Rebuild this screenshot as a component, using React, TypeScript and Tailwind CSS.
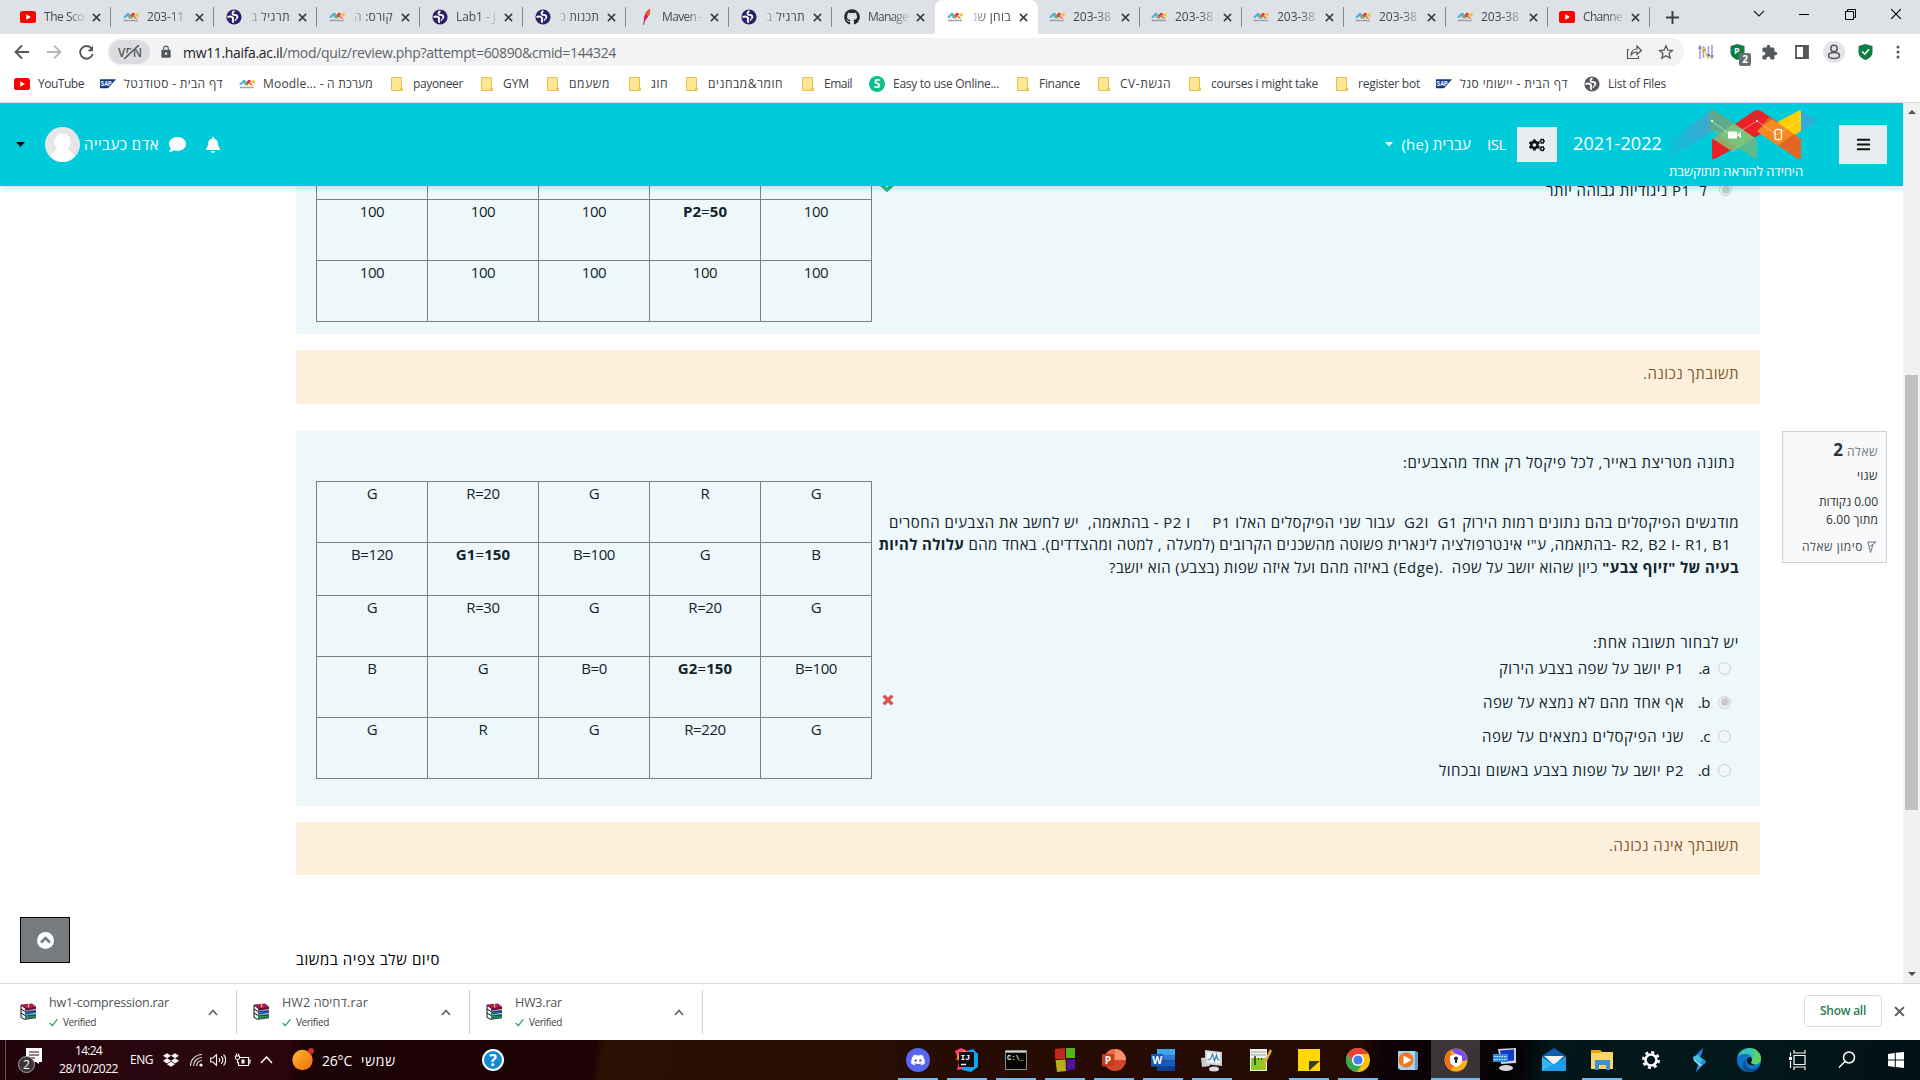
import React, { useLayoutEffect, useRef, useState } from "react";
import { FaBars, FaBell, FaCogs, FaComment, FaDiscord, FaDropbox, FaGithub } from "react-icons/fa";
import { MdExtension, MdLock } from "react-icons/md";

/* Text whose letter spacing is adjusted so that the run fills exactly w pixels. */
function Fit({ w, children, className = "", rtl = false }: { w: number; children: React.ReactNode; className?: string; rtl?: boolean }) {
  const ref = useRef<HTMLSpanElement>(null);
  const [ls, setLs] = useState(0);
  useLayoutEffect(() => {
    const el = ref.current;
    if (!el) return;
    const n = (el.textContent || "").length;
    const natural = el.getBoundingClientRect().width - ls * n;
    setLs((w - natural) / n);
  }, [w]);
  return (
    <span dir={rtl ? "rtl" : "ltr"} className={"inline-block shrink-0 whitespace-pre " + className}>
      <span ref={ref} className="inline-block" style={{ letterSpacing: ls }}>{children}</span>
    </span>
  );
}

/* ---------- small icons ---------- */
const YouTube = () => (
  <svg width="16" height="12" viewBox="0 0 16 12"><rect width="16" height="12" rx="2.6" fill="#f00" /><path d="M6.3 3.3v5.4L11 6z" fill="#fff" /></svg>
);
const Moodle = () => (
  <svg width="17" height="10" viewBox="0 0 17 10">
    <path d="M0 5.500 4.500.8Q5.500 0 6.500 1L8 2.500 6.500 4 5.500 3.200 2.500 6z" fill="#45b0e2" />
    <path d="M5.500 6 10 .8q1-.8 2 .2l1 1.200L11 4l-3 2.400z" fill="#e5322d" />
    <path d="M6 1.500 10.500 6.500H8L4.500 4z" fill="#63bd8e" />
    <path d="M10.500 2.500 15.500 6.500H13L9.500 4z" fill="#ee6a22" />
    <path d="M12.500 2.500 16.500.3V5L14 4z" fill="#f6c31a" />
    <path d="M1 8.700h15" stroke="#8d9094" strokeWidth="1.400" strokeDasharray="2 .5" />
  </svg>
);
const Globe = ({ c = "#2a1f6b" }: { c?: string }) => (
  <svg width="16" height="16" viewBox="0 0 16 16">
    <circle cx="8" cy="8" r="7.600" fill={c} />
    <path d="M8.500 2.200C6.500 2.800 6 4.500 7 5.400c1 .8 2.600.2 3.800 1.200.9.900.6 2.200-.3 2.900M1.500 8c2-.6 4.500-.5 5.500.8.6 1-.4 1.800-.2 3 .1.700.4 1.200.2 2" fill="none" stroke="#fff" strokeWidth="1.900" />
    <path d="M10.500 9.500c-.3 1-1.300 1.200-1.500 2.300" fill="none" stroke="#fff" strokeWidth="1.200" />
  </svg>
);
const Feather = () => (
  <svg width="16" height="16" viewBox="0 0 16 16"><path d="M11.500 0c2 2-.5 7.500-4 11L5.800 16l-.8-.3 1-4.700C5.500 7 8.500 1.500 11.500 0z" fill="#c8234b" /><path d="M11.500 0c1.500 1.800.5 4.500-1 7L8 6c.6-2.500 2-5 3.500-6z" fill="#e8622c" /></svg>
);
const Folder = () => (
  <svg width="16" height="16" viewBox="0 0 16 16"><path d="M2.500 1.500h10v11h1v2h-11z" fill="#ffe793" stroke="#e6c04a" /><path d="M11.500 14.500v-2h2" fill="none" stroke="#e6c04a" /></svg>
);
const Sap = () => (
  <svg width="17" height="10" viewBox="0 0 17 10"><path d="M0 0h17L8.500 9.500H0z" fill="#123a8c" /><text x=".5" y="7" fontSize="7" fontWeight="700" fill="#fff" fontFamily="Liberation Sans, sans-serif" textLength="12" lengthAdjust="spacingAndGlyphs">SAP</text></svg>
);
const SBadge = () => (
  <span className="flex h-4 w-4 shrink-0 items-center justify-center rounded-full bg-[#0fbf8b] font-['Open_Sans'] text-[12px] font-bold text-white">S</span>
);
const Close = ({ s = 9, c = "#3c4043", w = 1.8 }: { s?: number; c?: string; w?: number }) => (
  <svg width={s} height={s} viewBox="0 0 10 10"><path d="M1 1l8 8M9 1l-8 8" stroke={c} strokeWidth={w} /></svg>
);

/* ---------- browser chrome ---------- */
const tabs: { icon: React.ReactNode; t: string; w: number; rtl?: boolean; active?: boolean }[] = [
  { icon: <YouTube />, t: "The Sco", w: 40 },
  { icon: <Moodle />, t: "203-11", w: 37 },
  { icon: <Globe />, t: "תרגיל ב", w: 39, rtl: true },
  { icon: <Moodle />, t: "קורס: ה", w: 39, rtl: true },
  { icon: <Globe />, t: "Lab1 - J", w: 40 },
  { icon: <Globe />, t: "תכנות כ", w: 39, rtl: true },
  { icon: <Feather />, t: "Maven -", w: 40 },
  { icon: <Globe />, t: "תרגיל ב", w: 39, rtl: true },
  { icon: <FaGithub size={16} color="#24292f" />, t: "Manage", w: 40 },
  { icon: <Moodle />, t: "בוחן שנ", w: 39, rtl: true, active: true },
  { icon: <Moodle />, t: "203-38", w: 38 },
  { icon: <Moodle />, t: "203-38", w: 38 },
  { icon: <Moodle />, t: "203-38", w: 38 },
  { icon: <Moodle />, t: "203-38", w: 38 },
  { icon: <Moodle />, t: "203-38", w: 38 },
  { icon: <YouTube />, t: "Channe", w: 39 },
];

function TabStrip() {
  return (
    <div className="flex h-[34px] w-full bg-[#dee1e6] pl-2">
      {tabs.map((t, i) => (
        <div
          key={i}
          className={
            "flex h-[34px] shrink-0 items-center " +
            (i < 10 ? "w-[103px] pl-3 " : "w-[102px] pl-[11px] ") +
            (t.active ? "rounded-t-lg bg-white" : "")
          }
        >
          <span className="flex w-4 shrink-0 justify-center">{t.icon}</span>
          <span
            className={
              "ml-2 flex w-[40px] shrink-0 text-[12px] text-[#45494d] " +
              (t.rtl
                ? "justify-end [mask-image:linear-gradient(to_left,black_60%,rgba(0,0,0,0.15))]"
                : "[mask-image:linear-gradient(to_right,black_60%,rgba(0,0,0,0.15))]")
            }
          >
            <Fit w={t.w} rtl={t.rtl}>{t.t}</Fit>
          </span>
          <span className="ml-[6px] flex w-3 justify-center"><Close /></span>
          <span className="flex-1" />
          {!t.active && i !== 8 && <span className="h-5 w-px bg-[#85888d]" />}
        </div>
      ))}
      <div className="flex h-[34px] flex-1 items-center">
        <svg className="ml-[16px]" width="13" height="13" viewBox="0 0 13 13"><path d="M6.500 0v13M0 6.500h13" stroke="#3c4043" strokeWidth="2" /></svg>
        <div className="mb-[6px] ml-[74px] flex items-center text-black">
          <svg width="12" height="8" viewBox="0 0 12 8"><path d="M1 1l5 5 5-5" fill="none" stroke="#222" strokeWidth="1.200" /></svg>
          <span className="ml-[34px] h-px w-[10px] bg-black" />
          <svg className="ml-[36px]" width="11" height="11" viewBox="0 0 11 11"><path d="M.5 2.500h8v8h-8zM2.500 2.500v-2h8v8h-2" fill="none" stroke="#000" /></svg>
          <span className="ml-[34px]"><Close s={12} c="#000" w={1} /></span>
        </div>
      </div>
    </div>
  );
}

function Toolbar() {
  return (
    <div className="flex h-[36px] w-full items-center bg-white pl-[14px]">
      <svg width="16" height="16" viewBox="0 0 16 16"><path d="M15 8H2M8 1.500 1.500 8 8 14.500" fill="none" stroke="#54575b" strokeWidth="1.800" /></svg>
      <svg className="ml-[16px]" width="16" height="16" viewBox="0 0 16 16"><path d="M1 8h13M8 1.500 14.500 8 8 14.500" fill="none" stroke="#b6b9bc" strokeWidth="1.800" /></svg>
      <svg className="ml-[17px]" width="15" height="15" viewBox="0 0 15 15"><path d="M12.500 3.500A6.300 6.300 0 1 0 13.600 9" fill="none" stroke="#54575b" strokeWidth="1.900" /><path d="M14 .8v5.400H8.600z" fill="#54575b" /></svg>
      <div className="ml-[13px] flex h-7 w-[1577px] items-center rounded-full bg-[#f1f3f4] pl-[2px]">
        <span className="flex h-6 w-[41px] items-center justify-center rounded-full bg-[#dadce0]">
          <svg width="24" height="14" viewBox="0 0 24 14">
            <text x="0" y="12" fontSize="13" fontWeight="600" fill="#54575b" fontFamily="Open Sans, sans-serif" textLength="24" lengthAdjust="spacingAndGlyphs">VPN</text>
            <path d="M5 14 20 0" stroke="#dadce0" strokeWidth="3" /><path d="M6 14 21 0" stroke="#54575b" strokeWidth="1.500" />
          </svg>
        </span>
        <MdLock className="ml-[9px]" size={14} color="#54575b" />
        <Fit w={433} className="ml-[10px] text-[14px] text-[#5f6368]"><span className="text-[#202124]">mw11.haifa.ac.il</span>/mod/quiz/review.php?attempt=60890&amp;cmid=144324</Fit>
        <span className="flex-1" />
        <svg width="16" height="16" viewBox="0 0 16 16"><path d="M3 5.500H1.500v9h11V12M5 11c.3-4 2.500-6 6-6V2l4.300 4.500L11 10.500V8C8.500 8 6.500 8.800 5 11z" fill="none" stroke="#54575b" strokeWidth="1.200" /></svg>
        <svg className="ml-[16px] mr-[10px]" width="16" height="16" viewBox="0 0 16 16"><path d="m8 1.800 1.900 4.300 4.600.4-3.500 3 1.100 4.600L8 11.700l-4.100 2.400L5 9.500l-3.500-3 4.600-.4z" fill="none" stroke="#54575b" strokeWidth="1.300" /></svg>
      </div>
      <svg className="ml-[14px]" width="16" height="16" viewBox="0 0 16 16"><path d="M2 1v14M14 1v14M5.500 2v12M10.500 2v12" stroke="#a89be3" strokeWidth="1.600" /><path d="M.5 4h3M4 6h3M9 11h3M12.500 12h3" stroke="#6c5bc7" strokeWidth="1.500" /><path d="M4 9c2-7 3-7 4 0s2 5 4 4" fill="none" stroke="#ddd53a" strokeWidth="1.300" /></svg>
      <div className="relative ml-[16px] h-4 w-4">
        <svg width="15" height="16" viewBox="0 0 15 16"><path d="M7.500 0 14.500 2v6c0 4-3 6.500-7 8-4-1.500-7-4-7-8V2z" fill="#0c8043" /></svg>
        <span className="absolute left-[4px] top-[1px] text-[9px] font-bold leading-[12px] text-white">P</span>
        <span className="absolute left-[9px] top-[9px] flex h-[13px] w-[12px] items-center justify-center rounded-[2px] bg-[#6b6f74] text-[10px] font-bold text-white">2</span>
      </div>
      <MdExtension className="ml-[15px]" size={17} color="#54575b" />
      <svg className="ml-[17px]" width="14" height="14" viewBox="0 0 14 14"><path d="M1 1h12v12H1z" fill="none" stroke="#54575b" strokeWidth="1.800" /><path d="M8 1h5v12H8z" fill="#54575b" /></svg>
      <span className="ml-[14px] flex h-[22px] w-[22px] items-center justify-center rounded-full bg-[#e3e4ea]">
        <svg width="14" height="16" viewBox="0 0 14 16"><circle cx="7" cy="4.500" r="3.200" fill="none" stroke="#54575b" strokeWidth="1.500" /><path d="M1.500 11.500c0-1.500 2-3 5.500-3s5.500 1.500 5.500 3-2 3-5.500 3-5.500-1.500-5.500-3z" fill="none" stroke="#54575b" strokeWidth="1.500" /></svg>
      </span>
      <svg className="ml-[13px]" width="15" height="16" viewBox="0 0 15 16"><path d="M7.500 0 14.500 2v6c0 4-3 6.500-7 8-4-1.500-7-4-7-8V2z" fill="#0c8043" /><path d="m4.200 7.500 2.500 2.700 4.300-5" fill="none" stroke="#fff" strokeWidth="1.500" /></svg>
      <svg className="ml-[23px]" width="4" height="14" viewBox="0 0 4 14"><circle cx="2" cy="2" r="1.500" fill="#54575b" /><circle cx="2" cy="7" r="1.500" fill="#54575b" /><circle cx="2" cy="12" r="1.500" fill="#54575b" /></svg>
    </div>
  );
}

const bookmarks: { k: string; w: number; t: React.ReactNode; rtl?: boolean; cell: string }[] = [
  { k: "yt", w: 46, t: "YouTube", cell: "w-[86px]" },
  { k: "sap", w: 99, t: "דף הבית - סטודנטל", rtl: true, cell: "w-[139px]" },
  { k: "moodle", w: 110, t: "Moodle... - מערכת ה", cell: "w-[150px]" },
  { k: "f", w: 50, t: "payoneer", cell: "w-[90px]" },
  { k: "f", w: 26, t: "GYM", cell: "w-[66px]" },
  { k: "f", w: 41, t: "משעמם", rtl: true, cell: "w-[82px]" },
  { k: "f", w: 17, t: "חוג", rtl: true, cell: "w-[57px]" },
  { k: "f", w: 75, t: "חומר&מבחנים", rtl: true, cell: "w-[116px]" },
  { k: "f", w: 28, t: "Email", cell: "w-[69px]" },
  { k: "s", w: 106, t: "Easy to use Online...", cell: "w-[146px]" },
  { k: "f", w: 41, t: "Finance", cell: "w-[81px]" },
  { k: "f", w: 51, t: "CV-הגשת", cell: "w-[91px]" },
  { k: "f", w: 107, t: "courses i might take", cell: "w-[147px]" },
  { k: "f", w: 62, t: "register bot", cell: "w-[102px]" },
  { k: "sap", w: 108, t: "דף הבית - יישומי סגל", rtl: true, cell: "w-[148px]" },
  { k: "g", w: 58, t: "List of Files", cell: "w-[90px]" },
];
const bmIcon: Record<string, React.ReactNode> = {
  yt: <YouTube />, sap: <Sap />, moodle: <Moodle />, f: <Folder />, s: <SBadge />, g: <Globe c="#54575b" />,
};

function Bookmarks() {
  return (
    <div className="flex h-[33px] w-full items-center border-b border-[#dadce0] bg-white pb-[4px] pl-[14px]">
      {bookmarks.map((b, i) => (
        <div key={i} className={"flex shrink-0 items-center " + b.cell}>
          <span className="mr-2 flex w-4 shrink-0 justify-center">{bmIcon[b.k]}</span>
          <Fit w={b.w} rtl={b.rtl} className="text-[12px] leading-[16px] text-[#3c4043]">{b.t}</Fit>
        </div>
      ))}
    </div>
  );
}

/* ---------- site header ---------- */
const Logo = () => (
  <svg className="shrink-0" width="150" height="50" viewBox="0 0 150 50">
    <defs>
      <linearGradient id="lb" x1="0" x2="1"><stop offset="0" stopColor="#08c2dd" /><stop offset=".8" stopColor="#3aa8cf" /><stop offset="1" stopColor="#5eaa96" /></linearGradient>
    </defs>
    <path d="M0 31 40 2q3-2 6 0v17L0 49z" fill="url(#lb)" />
    <path d="M43 30 85 1q3.500-2 7 0l18 12-18 11L45.500 49q-2.500 1-2.500-1.500z" fill="#ea2127" />
    <path d="M41 1q3-1.500 6 0l41 28.500V47q0 3-2.500 1.500L42 20z" fill="#5cbb90" />
    <path d="M41 1q3-1.500 6 0l18 12.500L53 23l-11-4z" fill="#5faa8c" />
    <path d="m65 13.500 20 14L64 42 44 29z" fill="#7fc47b" fillOpacity=".85" />
    <path d="M129 1q3-2 3 1.500V21l-22 14-20-13z" fill="#ffcf05" />
    <path d="m100 7 32 22v18q0 3.500-3 2L88 21.500z" fill="#e26524" />
    <path d="m103 9 22 15-16 11.500L88 21.500z" fill="#f58a20" />
    <path d="M132 1 149 11l-17 11z" fill="#2bb0dc" />
    <path d="m43 11 20 15 25-15 20 14 24-16" fill="none" stroke="#fff" strokeOpacity=".6" strokeWidth=".7" />
    <circle cx="43" cy="11" r="1" fill="#fff" /><circle cx="88" cy="11" r="1" fill="#fff" />
    <path d="M84 5.500q4-3 8 0M85.500 8q2.500-2 5 0" fill="none" stroke="#a3343c" />
    <rect x="59" y="21.500" width="9" height="7" rx="1" fill="#fff" /><path d="m68 25 4-3v6z" fill="#fff" />
    <rect x="106" y="19.500" width="6.500" height="10" rx="1.500" fill="none" stroke="#fff" strokeWidth="1.300" />
  </svg>
);

function Header() {
  return (
    <div className="z-10 flex h-[83px] w-full shrink-0 items-center bg-[#00cbdb] pl-4 pr-4 text-white shadow-[0_2px_5px_rgba(0,0,0,0.14)]">
      <svg width="10" height="6" viewBox="0 0 10 6"><path d="M0 0h9L4.500 5z" fill="#000" /></svg>
      <span className="ml-[19px] flex h-[35px] w-[35px] overflow-hidden rounded-full bg-[#e6e6e6]">
        <svg width="35" height="35" viewBox="0 0 35 35"><path d="M17.500 6.500c4.500 0 8 3 8 8 0 3-1 6-3 8 4 2 7 5 9 8.500V35h-28v-4c2-3.500 5-6.500 9-8.500-2-2-3-5-3-8 0-5 3.500-8 8-8z" fill="#fff" /></svg>
      </span>
      <Fit w={75} rtl className="ml-[4px] text-[15px]">אדם כעבייה</Fit>
      <FaComment className="ml-[10px]" size={17} />
      <FaBell className="ml-[19px]" size={16} />
      <span className="flex-1" />
      <svg width="8" height="5" viewBox="0 0 8 5"><path d="M0 0h8L4 4.500z" fill="#fff" /></svg>
      <Fit w={70} rtl className="ml-[8px] text-[15px]">עברית &lrm;(he)&lrm;</Fit>
      <Fit w={19} className="ml-[16px] text-[15px]">ISL</Fit>
      <span className="ml-[11px] flex h-[35px] w-[40px] items-center justify-center bg-[#e9ecef]"><FaCogs size={16} color="#111" /></span>
      <Fit w={89} className="mb-[2px] ml-[16px] text-[18px]">2021-2022</Fit>
      <div className="ml-[7px] flex h-[70px] w-[152px] flex-col items-start">
        <Logo />
        <Fit w={134} rtl className="mt-[2px] text-[13px] leading-[18px]">היחידה להוראה מתוקשבת</Fit>
      </div>
      <span className="ml-[18px] flex h-[39px] w-[48px] items-center justify-center bg-[#e9ecef]"><FaBars size={15} color="#111" /></span>
    </div>
  );
}

/* ---------- quiz ---------- */
const Cell = ({ t, h }: { t: string; h: string }) => (
  <div className={"border-b border-r border-[#7d7f83] text-center text-[15px] leading-[22px] " + h}>
    {t.includes("=") && /[GP]\d/.test(t) ? (
      <span className="tracking-[0.1px]"><b>{t.split("=")[0]}</b>=<b>{t.split("=")[1]}</b></span>
    ) : (
      <span className="tracking-[-0.4px]">{t}</span>
    )}
  </div>
);
function Matrix({ rows, hs }: { rows: string[][]; hs: string[] }) {
  return (
    <div className="w-[556px] shrink-0 border-l border-t border-[#7d7f83]">
      {rows.map((r, i) => (
        <div key={i} className="grid grid-cols-5">
          {r.map((c, j) => <Cell key={j} t={c} h={hs[i]} />)}
        </div>
      ))}
    </div>
  );
}
const Radio = ({ on }: { on?: boolean }) => (
  <span className="flex h-[13px] w-[13px] shrink-0 items-center justify-center rounded-full border border-[#cbcdce] bg-[#f3f6f7]">
    {on && <span className="h-[8px] w-[8px] rounded-full bg-[#cbcbcb]" />}
  </span>
);
function Feedback({ w, t }: { w: number; t: string }) {
  return (
    <div className="flex w-[1464px] shrink-0 justify-end bg-[#fcefdc] pr-[21px] pt-[12px] text-[15px] leading-[22px] text-[#7d5a29]">
      <Fit w={w} rtl>{t}</Fit>
    </div>
  );
}
const options = [
  { k: "a.", w: 185, t: "P1 יושב על שפה בצבע הירוק" },
  { k: "b.", w: 201, t: "אף אחד מהם לא נמצא על שפה", on: true },
  { k: "c.", w: 202, t: "שני הפיקסלים נמצאים על שפה" },
  { k: "d.", w: 245, t: "P2 יושב על שפות בצבע באשום ובכחול" },
];

function Page() {
  return (
    <div className="flex h-[797px] w-full flex-col overflow-hidden bg-white pl-[296px] text-[#10242a]">
      <div className="flex h-[148px] w-[1464px] shrink-0 justify-between bg-[#eef8fb] pl-5">
        <div className="-mt-[48px] h-[182px]">
          <Matrix
            rows={[["", "", "", "", ""], ["100", "100", "100", "P2=50", "100"], ["100", "100", "100", "100", "100"]]}
            hs={["h-[61px]", "h-[61px]", "h-[61px]"]}
          />
        </div>
        <svg className="-mt-[6px] ml-[8px]" width="14" height="12" viewBox="0 0 14 12"><path d="m1.500 5 5.500 5 5.500-5" fill="none" stroke="#21bf8c" strokeWidth="3.600" /></svg>
        <div className="-mt-[7px] flex flex-1 items-start justify-end pr-[28px]">
          <Fit w={161} rtl className="mr-[12px] text-[15px] leading-[22px]">ל  P1 ניגודיות גבוהה יותר</Fit>
          <span className="mt-[4px]"><Radio on /></span>
        </div>
      </div>
      <div className="mt-4 flex h-[54px] shrink-0"><Feedback w={96} t="תשובתך נכונה." /></div>

      <div className="mt-[27px] flex h-[375px] shrink-0">
        <div className="flex w-[1464px] shrink-0 bg-[#eef8fb] pl-5 pr-[21px]">
          <div className="mt-[50px]">
            <Matrix
              rows={[
                ["G", "R=20", "G", "R", "G"],
                ["B=120", "G1=150", "B=100", "G", "B"],
                ["G", "R=30", "G", "R=20", "G"],
                ["B", "G", "B=0", "G2=150", "B=100"],
                ["G", "R", "G", "R=220", "G"],
              ]}
              hs={["h-[61px]", "h-[53px]", "h-[61px]", "h-[61px]", "h-[61px]"]}
            />
          </div>
          <div className="flex flex-1 flex-col items-end pt-[20px] text-[15px] leading-[22px]">
            <Fit w={332} rtl className="mr-[4px]">נתונה מטריצת באייר, לכל פיקסל רק אחד מהצבעים:</Fit>
            <Fit w={850} rtl className="mt-[38px]">מודגשים הפיקסלים בהם נתונים רמות הירוק G1  וG2  עבור שני הפיקסלים האלו P1     ו P2 - בהתאמה,  יש לחשב את הצבעים החסרים</Fit>
            <Fit w={854} rtl className="mr-[8px]">&lrm;R1, B1&lrm; -ו &lrm;R2, B2&lrm; -בהתאמה, ע"י אינטרפולציה לינארית פשוטה מהשכנים הקרובים (למעלה , למטה ומהצדדים). באחד מהם <b>עלולה להיות</b></Fit>
            <Fit w={630} rtl className="mt-[1px]"><b>בעיה של "זיוף צבע"</b> כיון שהוא יושב על שפה  .(Edge) באיזה מהם ועל איזה שפות (בצבע) הוא יושב?</Fit>
            <Fit w={146} rtl className="mt-[53px]">יש לבחור תשובה אחת:</Fit>
            <div className="mt-[-2px] flex w-full justify-between pl-[10px] pr-[8px]">
              <svg className="mt-[43px]" width="12" height="12" viewBox="0 0 11 11"><path d="m1.500 1.500 8 8M9.500 1.500l-8 8" stroke="#d9534f" strokeWidth="3.200" /></svg>
              <div className="flex flex-col">
                {options.map((o) => (
                  <div key={o.k} dir="rtl" className="flex h-[34px] items-center">
                    <Radio on={o.on} />
                    <span className="mr-[8px] w-[26px] shrink-0 tracking-[-0.4px]">{o.k}</span>
                    <Fit w={o.w} rtl>{o.t}</Fit>
                  </div>
                ))}
              </div>
            </div>
          </div>
        </div>
        <div className="ml-[22px] flex h-[132px] w-[105px] flex-col items-end border border-[#cad0d7] bg-[#f8f9fa] pr-[8px] text-[12px] text-[#2c3136]">
          <div dir="rtl" className="mt-[5px] flex h-[28px] items-baseline gap-[4px]"><Fit w={31} rtl className="text-[#6a737b]">שאלה</Fit><b className="text-[17px]">2</b></div>
          <Fit w={21} rtl className="mt-[2px] leading-[18px]">שגוי</Fit>
          <Fit w={59} rtl className="mt-[8px] leading-[18px]">0.00 נקודות</Fit>
          <Fit w={52} rtl className="leading-[18px]">מתוך 6.00</Fit>
          <div className="mt-[9px] flex items-center gap-[4px]">
            <Fit w={61} rtl className="leading-[18px] text-[#454b50]">סימון שאלה</Fit>
            <svg className="mr-px" width="10" height="12" viewBox="0 0 10 12"><path d="M3.500 11.500 1 1h8L3 5.500M3.500 11.500 6 3.500" fill="none" stroke="#6f747a" /></svg>
          </div>
        </div>
      </div>
      <div className="mt-4 flex h-[53px] shrink-0"><Feedback w={130} t="תשובתך אינה נכונה." /></div>
      <div className="mt-[73px] flex text-[15px] leading-[22px] text-black"><Fit w={144} rtl>סיום שלב צפיה במשוב</Fit></div>
    </div>
  );
}

/* ---------- downloads bar ---------- */
const Books = () => (
  <svg width="17" height="17" viewBox="0 0 17 17">
    <path d="M1 1.500 12 .5l4 3-11 2z" fill="#b0175c" /><path d="M5 5 16 3.500v2.800L5 7.500z" fill="#6d0f3c" />
    <path d="M1 2v12l4 2.500V5z" fill="#f4f4f4" /><path d="M1 2v12.500L5 16.500M5 5 1 2M5 8.500 1 6M5 12.500 1 10" stroke="#111" fill="none" />
    <path d="M5 8.500l11-1.200v3L5 11.500z" fill="#1c5fb4" /><path d="M5 12.500l11-1.200v3.200L5 16z" fill="#1d8a55" />
    <path d="M5 8h11M5 12h11M5 16.300l11-1.500" stroke="#111" strokeWidth=".8" />
    <path d="M8.500 1v3.500" stroke="#d8bf3c" strokeWidth="1.400" />
  </svg>
);
function Downloads() {
  const items = [{ t: "hw1-compression.rar", w: 120 }, { t: "HW2 דחיסה.rar", w: 86 }, { t: "HW3.rar", w: 47 }];
  return (
    <div className="flex h-[57px] w-full border-t border-[#dadce0] bg-white">
      {items.map((d, i) => (
        <div key={d.t} className={"mt-[6px] flex h-[44px] items-center border-r border-[#cdcfd2] " + (i ? "w-[233px] pl-[16px]" : "w-[237px] pl-[20px]")}>
          <span className="mb-[2px] shrink-0"><Books /></span>
          <div className="ml-[12px] flex w-[159px] shrink-0 flex-col">
            <Fit w={d.w} className="text-[12.5px] leading-[20px] text-[#4f5357]">{d.t}</Fit>
            <div className="flex items-center gap-[5px]">
              <svg width="9" height="9" viewBox="0 0 10 9"><path d="m.7 5 3 3L9.300.8" fill="none" stroke="#34a86a" strokeWidth="1.500" /></svg>
              <Fit w={33} className="text-[10px] leading-[18px] text-[#3c4043]">Verified</Fit>
            </div>
          </div>
          <svg width="10" height="7" viewBox="0 0 10 7"><path d="m1 6 4-4.500L9 6" fill="none" stroke="#5f6368" strokeWidth="1.700" /></svg>
        </div>
      ))}
      <span className="flex-1" />
      <div className="mt-[11px] flex h-8 w-[78px] items-center justify-center rounded-[4px] border border-[#dadce0]">
        <Fit w={46} className="text-[12px] font-semibold text-[#2c7a55]">Show all</Fit>
      </div>
      <span className="ml-[12px] mr-[15px] mt-[22px]"><Close s={11} c="#54575b" w={1.7} /></span>
    </div>
  );
}

/* ---------- taskbar ---------- */
const apps: { n: string; bar?: boolean; active?: boolean; svg: React.ReactNode }[] = [
  { n: "discord", bar: true, svg: <><circle cx="12" cy="12" r="12" fill="#5865f2" /><g transform="translate(4.500 4.500)"><FaDiscord size={15} color="#fff" /></g></> },
  { n: "idea", bar: true, svg: <><path d="m0 3 6-3 7 3-3 18-8 1 2-8z" fill="#f8416c" /><path d="m1 12 3-7 6-3v8z" fill="#fd9a2b" /><path d="M12 3l6-2 5 5v13l-7 5-9-2z" fill="#12a5f4" /><rect x="4" y="4" width="15" height="15" fill="#120a12" /><text x="5.500" y="12" fontSize="8" fontWeight="700" fontFamily="Liberation Mono, monospace" fill="#fff">IJ</text><path d="M6 16.500h5" stroke="#fff" strokeWidth="1.500" /></> },
  { n: "cmd", bar: true, svg: <><rect x="1" y="2" width="22" height="20" fill="#8b8f92" /><rect x="2" y="5" width="20" height="16" fill="#050505" /><path d="M2 3.500h20" stroke="#d6d9db" /><text x="3" y="12" fontSize="7" fontWeight="700" fontFamily="Liberation Mono, monospace" fill="#eee">C:\_</text></> },
  { n: "squares", bar: true, svg: <><path d="m2 1 10-1v11H2z" fill="#c2281e" /><path d="M13 0h9v10h-9z" fill="#53b41c" /><path d="m2.500 12 10-.5L13 23l-9 1z" fill="#b9ad1c" /><path d="M13.500 11.500 22 11v10l-8.500 2z" fill="#4f12a5" /></> },
  { n: "ppt", bar: true, svg: <><circle cx="13" cy="12" r="11" fill="#d24726" /><path d="M13 1a11 11 0 0 1 11 11H13z" fill="#ff8f6b" /><path d="M13 1v11H2A11 11 0 0 1 13 1z" fill="#ed6c47" /><rect x="0" y="6" width="12" height="12.500" rx="1" fill="#c43e1c" /><text x="2.800" y="16" fontSize="10" fontWeight="700" fontFamily="Open Sans, sans-serif" fill="#fff">P</text></> },
  { n: "word", bar: true, svg: <><path d="M6 1h18v6H6z" fill="#41a5ee" /><path d="M6 7h18v5.500H6z" fill="#2b7cd3" /><path d="M6 12.500h18V18H6z" fill="#185abd" /><path d="M6 18h18v5H6z" fill="#103f91" /><rect x="0" y="6" width="12.500" height="12.500" rx="1" fill="#185abd" /><text x="1.300" y="15.800" fontSize="10" fontWeight="700" fontFamily="Open Sans, sans-serif" fill="#fff" textLength="10" lengthAdjust="spacingAndGlyphs">W</text></> },
  { n: "monitor", bar: true, svg: <><path d="m1 10 8-1 1 9-8 1z" fill="#c9ccce" /><path d="m5 2 17 2v14L5 16z" fill="#cfd3d5" /><path d="m7 4 13 1.500v10L7 14.500z" fill="#f4f8fa" /><path d="m7.500 12 3-1 2-5 2 7 2-6 1 4 2 1" fill="none" stroke="#3d83b8" strokeWidth="1.200" /><ellipse cx="14" cy="21" rx="5" ry="2.500" fill="#d9dcde" /></> },
  { n: "notepad", svg: <><path d="M2 1h17v22H2z" fill="#f2f3ee" /><path d="M3 10h15v12H3z" fill="#8ac926" /><path d="M3 4h15M3 7h15" stroke="#9aa09a" /><path d="M7 8v9M10 11h1M13 11h1" stroke="#16321a" strokeWidth="1.500" /><path d="m22 1-8 17-1 4 3-3L24 3z" fill="#dfa93a" /></> },
  { n: "sticky", bar: true, svg: <><path d="M1 1h22v12L13 23H1z" fill="#ffd800" /><path d="M12 23V13h11z" fill="#3b3a2e" /><path d="M12 23 23 13v10z" fill="#ffd800" /></> },
  { n: "chrome", bar: true, svg: <><circle cx="12" cy="12" r="12" fill="#fbc116" /><path d="M12 12 6.800 15 1.600 6A12 12 0 0 0 11 24l6-9z" fill="#34a853" /><path d="M1.600 6A12 12 0 0 1 22.400 6H12L6.500 14z" fill="#ea4335" /><circle cx="12" cy="12" r="6" fill="#fff" /><circle cx="12" cy="12" r="4.600" fill="#3f7ff0" /></> },
  { n: "media", svg: <><path d="M3 3h17l2 2v17H5l-2-2z" fill="#a9d3e8" /><path d="m20 3 3 1v17l-3 1z" fill="#5c9cbf" /><circle cx="11" cy="12" r="7.500" fill="#f5761e" /><path d="m8.500 7.500 8 4.500-8 4.500z" fill="#fff" /></> },
  { n: "privacy", bar: true, active: true, svg: <><circle cx="12" cy="12" r="11.500" fill="#f7b21b" /><path d="M7 2a11.500 11.500 0 0 1 16.500 10l-6 1L12 6z" fill="#7c4cf0" /><path d="M7 2a11.500 11.500 0 0 0-.5 20l4-4L7 7z" fill="#f06f1e" /><path d="m12 6 6 2v5c0 3-3 5-6 6-3-1-6-3-6-6V8z" fill="#fff" /><path d="M12 10v5" stroke="#1c2b4a" strokeWidth="2" /><circle cx="12" cy="10.500" r="2" fill="#1c2b4a" /></> },
  { n: "remote", svg: <><path d="m5 1 18-1v15l-15 1z" fill="#cdd4dd" /><path d="m7 2.500 14-1v11l-12 1z" fill="#1638c8" /><path d="M0 6h15v8H0z" fill="#2e8be0" /><path d="M1 8.500h13M1 11.500h13" stroke="#d8ecfb" strokeDasharray="1.500 1" /><ellipse cx="13" cy="20" rx="7" ry="3" fill="#d5d8db" /></> },
  { n: "mail", svg: <><path d="M0 8 12 0l12 8v15H0z" fill="#0f5fae" /><path d="M2 8h20L12 17z" fill="#f1f1f1" /><path d="M0 9l12 8 12-8v14H0z" fill="#32b8f2" /><path d="m0 23 24-14v14z" fill="#1c9ee8" /></> },
  { n: "files", bar: true, svg: <><path d="M1 2h9l2 2h11v17H1z" fill="#ffd467" /><path d="M1 2h9l1.500 3H1z" fill="#e8a411" /><path d="M5 12h15v10h-4v-5H9v5H5z" fill="#3f8fd6" /></> },
  { n: "settings", svg: <><circle cx="12" cy="12" r="5.500" fill="none" stroke="#fff" strokeWidth="2.600" /><circle cx="12" cy="12" r="7.700" fill="none" stroke="#fff" strokeWidth="2.600" strokeDasharray="3.024 3.024" /></> },
  { n: "bolt", svg: <><path d="m15 0-1.500 7L8 13l-3-3z" fill="#2f7fe6" /><path d="m5 9 5-2 8 7-4 3z" fill="#35c6ee" /><path d="m8 24 2-8 6-5 2 3z" fill="#2b8fe6" /><path d="m5 9 3 3 6 5-2 1-6-5z" fill="#8adcf7" /></> },
  { n: "edge", svg: <><circle cx="12" cy="12" r="12" fill="#0f74c8" /><path d="M.5 9C2 3.500 7 0 12.500 0 19 0 24 5 24 10.500c0 4-3 6-6 6-2 0-4-1-4-2s1-1.500 1-3C15 8 12 6 8 6 4.500 6 2 7 .5 9z" fill="#35c5b4" /><path d="M15 .4C20.500 2 24 6 24 10.500c0 4-3 6-6 6-2 0-4-1-4-2s1-1.500 1-3c3-3 3-7 0-11z" fill="#5cd45f" /><path d="M9 11c-2 6 2 10 7 10 3 0 5-1 6-2-2 5-8 5.500-11 5C5 23 4 15 9 11z" fill="#0b4d93" /><path d="M12 9c2 0 3.500 1.500 3 3-.5 1.500-1 1.500-1 2.500s2 2.500 5 2c-5 2-10-1-9-5z" fill="#02171b" /></> },
  { n: "taskview", svg: <><path d="M8.500 7h11v9h-11zM8.500 1.500v3h11v-3M8.500 21.500v-3h11v3M5 4v4M5 12.500v7" transform="translate(-.5 .5)" fill="none" stroke="#fff" strokeWidth="1.200" /><path d="M3 9h3v3H3z" fill="#fff" /></> },
  { n: "search", svg: <><circle cx="14" cy="9.500" r="5.500" fill="none" stroke="#fff" strokeWidth="1.500" /><path d="m10 13.500-6 6" stroke="#fff" strokeWidth="1.500" /></> },
  { n: "start", svg: <><path d="m4 6 6.800-1v6.500H4zM11.800 4.800 20 4v7.500h-8.200zM4 12.500h6.800V19L4 18zM11.800 12.500H20V20l-8.200-1z" fill="#fff" /></> },
];

function Taskbar() {
  return (
    <div className="flex h-[40px] w-full overflow-hidden bg-[linear-gradient(100deg,#21040b_0%,#2a0710_8%,#2b060d_15%,#1a0305_16%,#1d0306_31%,#281204_31.400%,#260c03_50%,#240a04_70.500%,#0c0208_72%,#050306_79%,#03161a_80.500%,#02191c_90%,#021116_100%)] text-white">
      <div className="ml-[5px] flex w-[600px] shrink-0 items-center border-l border-[#6b5156] pl-[18px]">
        <div className="relative mb-[10px] h-[18px] w-[18px]">
          <svg width="18" height="18" viewBox="0 0 18 18"><path d="M2 2h16v14h-3v2l-3-2H2z" fill="#fff" /><path d="M5 6h10M5 9h10M5 12h6" stroke="#2a0710" strokeWidth="1.200" /></svg>
          <span className="absolute -left-[6px] top-[10px] flex h-[17px] w-[17px] items-center justify-center rounded-full border border-[#a9a4a5] bg-[#3d3436] text-[12px]">2</span>
        </div>
        <div className="ml-[17px] flex w-[59px] flex-col items-center text-[12px] leading-[18px]">
          <Fit w={27}>14:24</Fit>
          <Fit w={59}>28/10/2022</Fit>
        </div>
        <Fit w={23} className="ml-[12px] text-[12px]">ENG</Fit>
        <FaDropbox className="ml-[10px]" size={16} />
        <svg className="ml-[10px]" width="14" height="14" viewBox="0 0 14 14"><path d="M1.500 13A11.500 11.500 0 0 1 13 1.500M4.500 13A8.500 8.500 0 0 1 13 4.500M7.500 13A5.500 5.500 0 0 1 13 7.500" fill="none" stroke="#ddd" strokeWidth="1.200" /><circle cx="12" cy="12" r="1.600" fill="#fff" /></svg>
        <svg className="ml-[7px]" width="16" height="14" viewBox="0 0 16 14"><path d="M.7 5v4H3l3.500 3.300V1.700L3 5zM9 5q1.500 2 0 4M11.300 3.200q3 3.800 0 7.600M13.600 1.500q4.200 5.500 0 11" fill="none" stroke="#fff" strokeWidth="1.100" /></svg>
        <svg className="ml-[8px]" width="17" height="14" viewBox="0 0 17 14"><path d="M5 4.500h9.500v8H4.500V9M14.500 7H16v3h-1.500M1.500 3v2.500q2 2.500 4 0V3zM2.500 3V.5M4.500 3V.5M3.500 7v3" fill="none" stroke="#fff" strokeWidth="1.100" /><path d="M7.500 6.500h3v4h-3z" fill="#fff" /></svg>
        <svg className="ml-[9px]" width="13" height="8" viewBox="0 0 13 8"><path d="m1 7 5.500-6L12 7" fill="none" stroke="#fff" strokeWidth="1.400" /></svg>
        <svg className="ml-[19px]" width="22" height="26" viewBox="0 0 22 26"><defs><linearGradient id="sun" x1="0" y1="0" x2="1" y2="1"><stop offset="0" stopColor="#fbbd2c" /><stop offset="1" stopColor="#f0690c" /></linearGradient></defs><circle cx="10.500" cy="13" r="10.200" fill="url(#sun)" /><circle cx="19" cy="4" r="3" fill="#d12d2d" /></svg>
        <Fit w={30} className="ml-[8px] text-[14px]">26°C</Fit>
        <Fit w={35} rtl className="ml-[9px] text-[14px]">שמשי</Fit>
        <span className="ml-[86px] flex h-[22px] w-[22px] items-center justify-center rounded-full border-2 border-white bg-[#128bd4] text-[16px] font-bold leading-[16px]">?</span>
      </div>
      <div className="ml-[289px] flex">
        {apps.map((a) => (
          <div key={a.n} className={"flex h-[40px] w-[48.860px] shrink-0 flex-col items-center justify-between " + (a.active ? "bg-white/20" : "")}>
            <svg className="mt-2" width="24" height="24" viewBox="0 0 24 24">{a.svg}</svg>
            {a.bar && <span className={"h-[2px] bg-[#76b9ed] " + (a.active ? "w-full" : "w-[40px]")} />}
          </div>
        ))}
      </div>
    </div>
  );
}

export default function App() {
  return (
    <div className="flex h-[1080px] w-[1920px] flex-col overflow-hidden bg-white font-['Open_Sans','Noto_Sans',sans-serif]">
      <TabStrip />
      <Toolbar />
      <Bookmarks />
      <div className="flex h-[880px] w-full">
        <div className="relative flex w-[1903px] flex-col overflow-hidden">
          <Header />
          <Page />
          <div className="absolute left-[20px] top-[814px] flex h-[46px] w-[50px] items-center justify-center border border-black bg-[#767c80]">
            <svg width="17" height="17" viewBox="0 0 17 17"><circle cx="8.500" cy="8.500" r="8.500" fill="#fff" /><path d="m4 10.500 4.500-4.500 4.500 4.500" fill="none" stroke="#767c80" strokeWidth="2.600" /></svg>
          </div>
        </div>
        <div className="flex w-[17px] flex-col items-center bg-[#f1f1f1] py-[6px]">
          <svg width="8" height="6" viewBox="0 0 8 6"><path d="M0 5h8L4 1z" fill="#505050" /></svg>
          <span className="mt-[260px] h-[435px] w-[13px] bg-[#c1c1c1]" />
          <span className="flex-1" />
          <svg width="8" height="6" viewBox="0 0 8 6"><path d="M0 1h8L4 5z" fill="#505050" /></svg>
        </div>
      </div>
      <Downloads />
      <Taskbar />
    </div>
  );
}
